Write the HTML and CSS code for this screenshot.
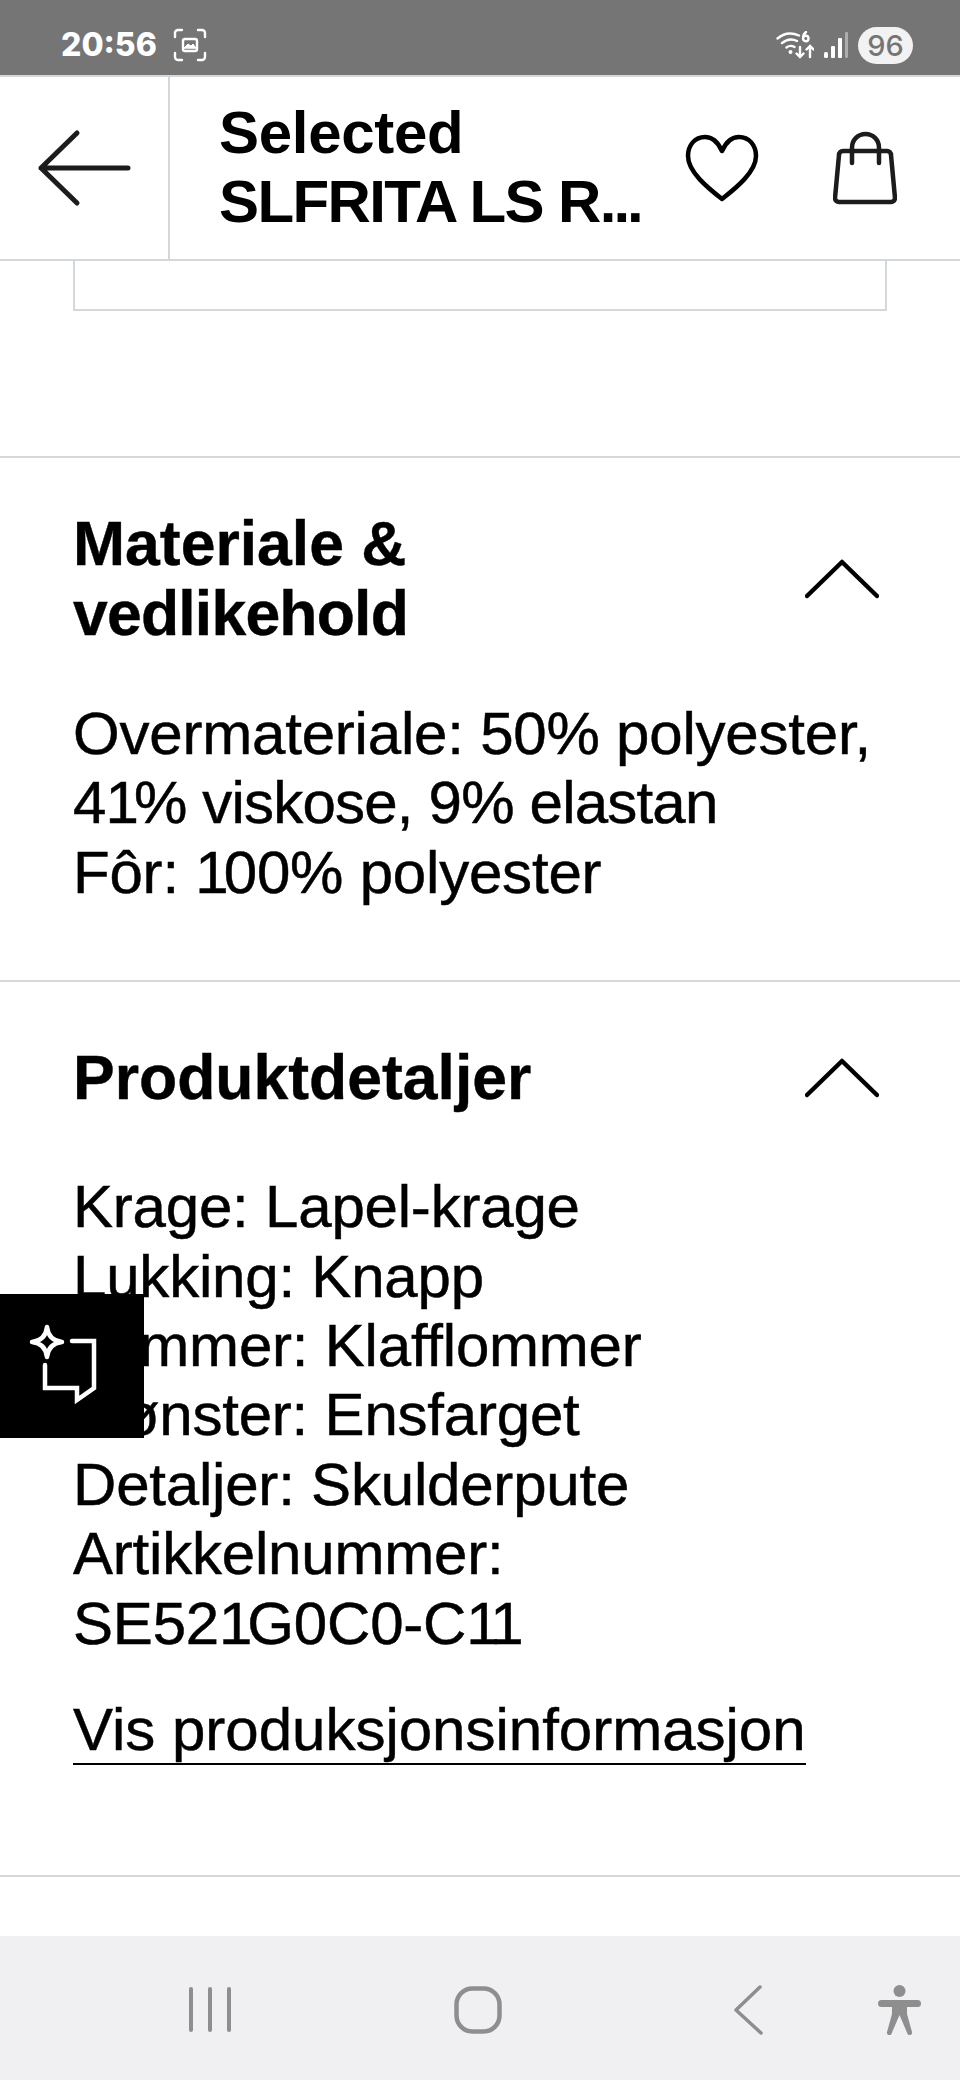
FILE: index.html
```html
<!DOCTYPE html>
<html lang="nb">
<head>
    <meta charset="UTF-8">
    <meta name="viewport" content="width=device-width, initial-scale=1.0">
    <title>Selected SLFRITA LS R...</title>
    <link rel="stylesheet" href="styles.css">
</head>
<body>
    <div class="phone">
        <!-- status bar -->
        <div class="status-bar">
            <div class="status-left">
                <span class="clock">20:56</span>
                <svg width="34" height="34" viewBox="0 0 34 34" fill="none" stroke="#fff" stroke-width="2.4" stroke-linecap="round">
                    <path d="M2 9V5a3 3 0 0 1 3-3h4M25 2h4a3 3 0 0 1 3 3v4M32 25v4a3 3 0 0 1-3 3h-4M9 32H5a3 3 0 0 1-3-3v-4"/>
                    <rect x="10" y="11" width="14" height="12" rx="2"/>
                    <path d="M11 20l4-4 3 2 2-2 3 4z" fill="#fff" stroke-width="1"/>
                </svg>
            </div>
            <div class="status-right">
                <svg class="wifi" width="38" height="28" viewBox="0 0 38 28" fill="none" stroke="#fff" stroke-width="2.400" stroke-linecap="round">
                    <path d="M1.500 7.500C8 2 16 1.500 23 4.500M6 12c5-4 10-4.500 15-2M10.500 16.500c2.500-2 5.500-2 8-.5"/>
                    <circle cx="14.500" cy="21" r="2" fill="#fff" stroke="none"/>
                    <path d="M30 1c-2 1.500-3 3.500-3 6 0 2 1.200 3.200 2.800 3.200s2.700-1.200 2.700-2.800-1.100-2.600-2.700-2.600-2.500 1-2.700 2.200"/>
                    <path d="M24 16v10M20.500 22.500l3.500 3.500 3.500-3.500M34 26V15M30.500 18.500l3.500-3.500 3.500 3.500"/>
                </svg>
                <svg class="signal" width="24" height="26" viewBox="0 0 24 26" fill="#fff">
                    <rect x="0" y="20" width="4" height="6" rx="1.500"/>
                    <rect x="7" y="14" width="4" height="12" rx="1"/>
                    <rect x="14" y="6" width="4" height="20" rx="1"/>
                    <rect x="21" y="0" width="3" height="26" rx="1" fill="#adadad"/>
                </svg>
                <span class="battery">96</span>
            </div>
        </div>

        <!-- header -->
        <header class="top-bar">
            <a class="back-btn" href="#">
                <svg width="96" height="80" viewBox="0 0 96 80" fill="none" stroke="#1c1c1c" stroke-width="5" stroke-linecap="round" stroke-linejoin="round">
                    <path d="M92 40H5M41 5L5 40l36 35"/>
                </svg>
            </a>
            <div class="top-title">Selected<br><span class="name">SLFRITA LS R</span><span class="dots">...</span></div>
            <div class="top-icons">
                <svg width="74" height="68" viewBox="0 0 74 68" fill="none" stroke="#000" stroke-width="4.500" stroke-linejoin="round">
                    <path d="M37 17C33 8 27 3 20 3 10 3 3 11 3 22c0 16 20 32 34 43 14-11 34-27 34-43C71 11 64 3 54 3 47 3 41 8 37 17z"/>
                </svg>
                <svg width="64" height="74" viewBox="0 0 64 74" fill="none" stroke="#1c1c1c" stroke-width="4.500" stroke-linecap="round" stroke-linejoin="round">
                    <path d="M10 20h44a4 4 0 0 1 4 4l4 43a4 4 0 0 1-4 4H6a4 4 0 0 1-4-4l4-43a4 4 0 0 1 4-4z"/>
                    <path d="M19 32V16.500a13.500 13.500 0 0 1 27 0V32"/>
                </svg>
            </div>
        </header>

        <div class="content">
            <div class="size-box"></div>

            <section class="block">
                <div class="block-head">
                    <h2>Materiale &amp;<br><span class="tight">vedlikehold</span></h2>
                    <svg class="chevron" width="74" height="40" viewBox="0 0 74 40" fill="none" stroke="#000" stroke-width="4.500" stroke-linecap="round" stroke-linejoin="round"><path d="M2 37L37 3l35 34"/></svg>
                </div>
                <p class="info">Overmateriale: 50% polyester,<br><span class="tight">4<span class="one">1</span>% viskose, 9% elastan</span><br>Fôr: <span class="one">1</span>00% polyester</p>
            </section>

            <section class="block details">
                <div class="block-head">
                    <h2>Produktdetaljer</h2>
                    <svg class="chevron" width="74" height="40" viewBox="0 0 74 40" fill="none" stroke="#000" stroke-width="4.500" stroke-linecap="round" stroke-linejoin="round"><path d="M2 37L37 3l35 34"/></svg>
                </div>
                <p class="info">Krage: Lapel-krage<br>Lukking: Knapp<br>Lommer: Klafflommer<br>Mønster: Ensfarget<br>Detaljer: Skulderpute<br>Artikkelnummer:<br>SE52<span class="one">1</span>G0C0-C<span class="one">11</span></p>
                <a class="prod-link" href="#">Vis produksjonsinformasjon</a>
            </section>
            <div class="end-line"></div>
        </div>

        <!-- feedback button -->
        <div class="feedback">
            <svg width="144" height="144" viewBox="0 0 144 144" fill="none" stroke="#fff" stroke-width="4.500" stroke-linecap="round">
                <path d="M47 33c1 9 6 14 15 15-9 1-14 6-15 15-1-9-6-14-15-15 9-1 14-6 15-15z" stroke-linejoin="round"/>
                <path d="M72 47h22v47l-17 12V94H45V71"/>
            </svg>
        </div>

        <!-- android nav -->
        <nav class="nav-bar">
            <svg class="nav-recent" width="42" height="45" viewBox="0 0 42 45" fill="#8e8e8e">
                <rect x="0" y="0" width="4" height="45" rx="2"/>
                <rect x="19" y="0" width="4" height="45" rx="2"/>
                <rect x="38" y="0" width="4" height="45" rx="2"/>
            </svg>
            <svg class="nav-home" width="48" height="48" viewBox="0 0 48 48" fill="none" stroke="#8e8e8e" stroke-width="4.500">
                <rect x="2.500" y="2.500" width="43" height="43" rx="16"/>
            </svg>
            <svg class="nav-back" width="30" height="50" viewBox="0 0 30 50" fill="none" stroke="#8e8e8e" stroke-width="3.500" stroke-linecap="round" stroke-linejoin="round">
                <path d="M27 2L3 25l25 23"/>
            </svg>
            <svg class="nav-access" width="43" height="50" viewBox="0 0 43 50" fill="#8e8e8e">
                <ellipse cx="21.500" cy="6" rx="6" ry="6"/>
                <rect x="0" y="15" width="43" height="7" rx="3.500"/>
                <path d="M14 21v8L9 47a2.400 2.400 0 0 0 4.700 1.200L21.500 30l7.800 18.200A2.400 2.400 0 0 0 34 47l-5-18v-8z"/>
            </svg>
        </nav>
    </div>
</body>
</html>
```

FILE: styles.css
```css
html, body {
    margin: 0;
    padding: 0;
}
body {
    font-family: "Liberation Sans", Arial, sans-serif;
    color: #000;
    background-color: #fff;
}
a {
    color: inherit;
}
.phone {
    position: relative;
    width: 960px;
    height: 2080px;
    display: flex;
    flex-direction: column;
    overflow: hidden;
}
.status-bar {
    height: 75px;
    flex: none;
    box-sizing: border-box;
    padding: 15px 47px 0 61px;
    display: flex;
    justify-content: space-between;
    align-items: center;
    background-color: #757575;
    color: #fff;
}
.status-left {
    display: flex;
    align-items: center;
    gap: 16px;
}
.clock {
    font-family: Inter, "Liberation Sans", sans-serif;
    font-size: 32px;
    font-weight: 800;
    line-height: 44px;
}
.status-right {
    display: flex;
    align-items: center;
    gap: 10px;
}
.battery {
    width: 55px;
    height: 37px;
    border-radius: 19px;
    background-color: #f2f2f2;
    color: #757575;
    font-family: Inter, "Liberation Sans", sans-serif;
    font-size: 29px;
    font-weight: 500;
    line-height: 37px;
    text-align: center;
}
.top-bar {
    height: 186px;
    flex: none;
    box-sizing: border-box;
    display: flex;
    align-items: stretch;
    border-top: 2px solid #d3d8dc;
    border-bottom: 2px solid #d3d8dc;
}
.back-btn {
    width: 170px;
    flex: none;
    box-sizing: border-box;
    display: flex;
    align-items: center;
    justify-content: center;
    border-right: 2px solid #d3d8dc;
}
.top-title {
    flex: 1;
    padding: 21px 0 0 49px;
    font-size: 60px;
    font-weight: 700;
    line-height: 69px;
    letter-spacing: -0.3px;
}
.name {
    letter-spacing: -1.600px;
}
.dots {
    letter-spacing: -3px;
}
.top-icons {
    display: flex;
    align-items: center;
    gap: 74px;
    padding-right: 63px;
}
.content {
    flex: 1;
}
.size-box {
    height: 50px;
    margin: 0 73px;
    box-sizing: border-box;
    border: 2px solid #d3d8dc;
    border-top: none;
}
.block {
    margin-top: 145px;
    padding: 0 73px 0;
    border-top: 2px solid #d3d8dc;
}
.block-head {
    display: flex;
    justify-content: space-between;
    align-items: center;
    padding: 50px 8px 0 0;
}
.block-head h2 {
    margin: 0;
    font-size: 62.500px;
    font-weight: 700;
    line-height: 70px;
    -webkit-text-stroke: 0.4px #000;
}
.tight {
    letter-spacing: -0.8px;
}
.chevron {
    margin-top: 2px;
}
.info {
    margin: 51px 0 0;
    font-size: 60px;
    line-height: 69.400px;
    letter-spacing: -0.2px;
    -webkit-text-stroke: 0.5px #000;
}
.one {
    letter-spacing: -5px;
}
.details {
    margin-top: 73px;
}
.details .block-head {
    padding-top: 60px;
}
.details .info {
    margin-top: 60px;
}
.prod-link {
    display: inline-block;
    margin-top: 38px;
    font-size: 60px;
    line-height: 67px;
    -webkit-text-stroke: 0.5px #000;
    text-decoration: none;
    border-bottom: 2px solid #000;
}
.end-line {
    margin-top: 110px;
    border-top: 2px solid #d3d8dc;
}
.feedback {
    position: absolute;
    left: 0;
    top: 1294px;
    width: 144px;
    height: 144px;
    background-color: #000;
}
.nav-bar {
    position: absolute;
    left: 0;
    right: 0;
    bottom: 0;
    height: 144px;
    box-sizing: border-box;
    padding: 3px 0 0 189px;
    background-color: #f0f0f2;
    display: flex;
    align-items: center;
}
.nav-home {
    margin-left: 223px;
}
.nav-back {
    margin-left: 231px;
}
.nav-access {
    margin-left: 115px;
}
```
